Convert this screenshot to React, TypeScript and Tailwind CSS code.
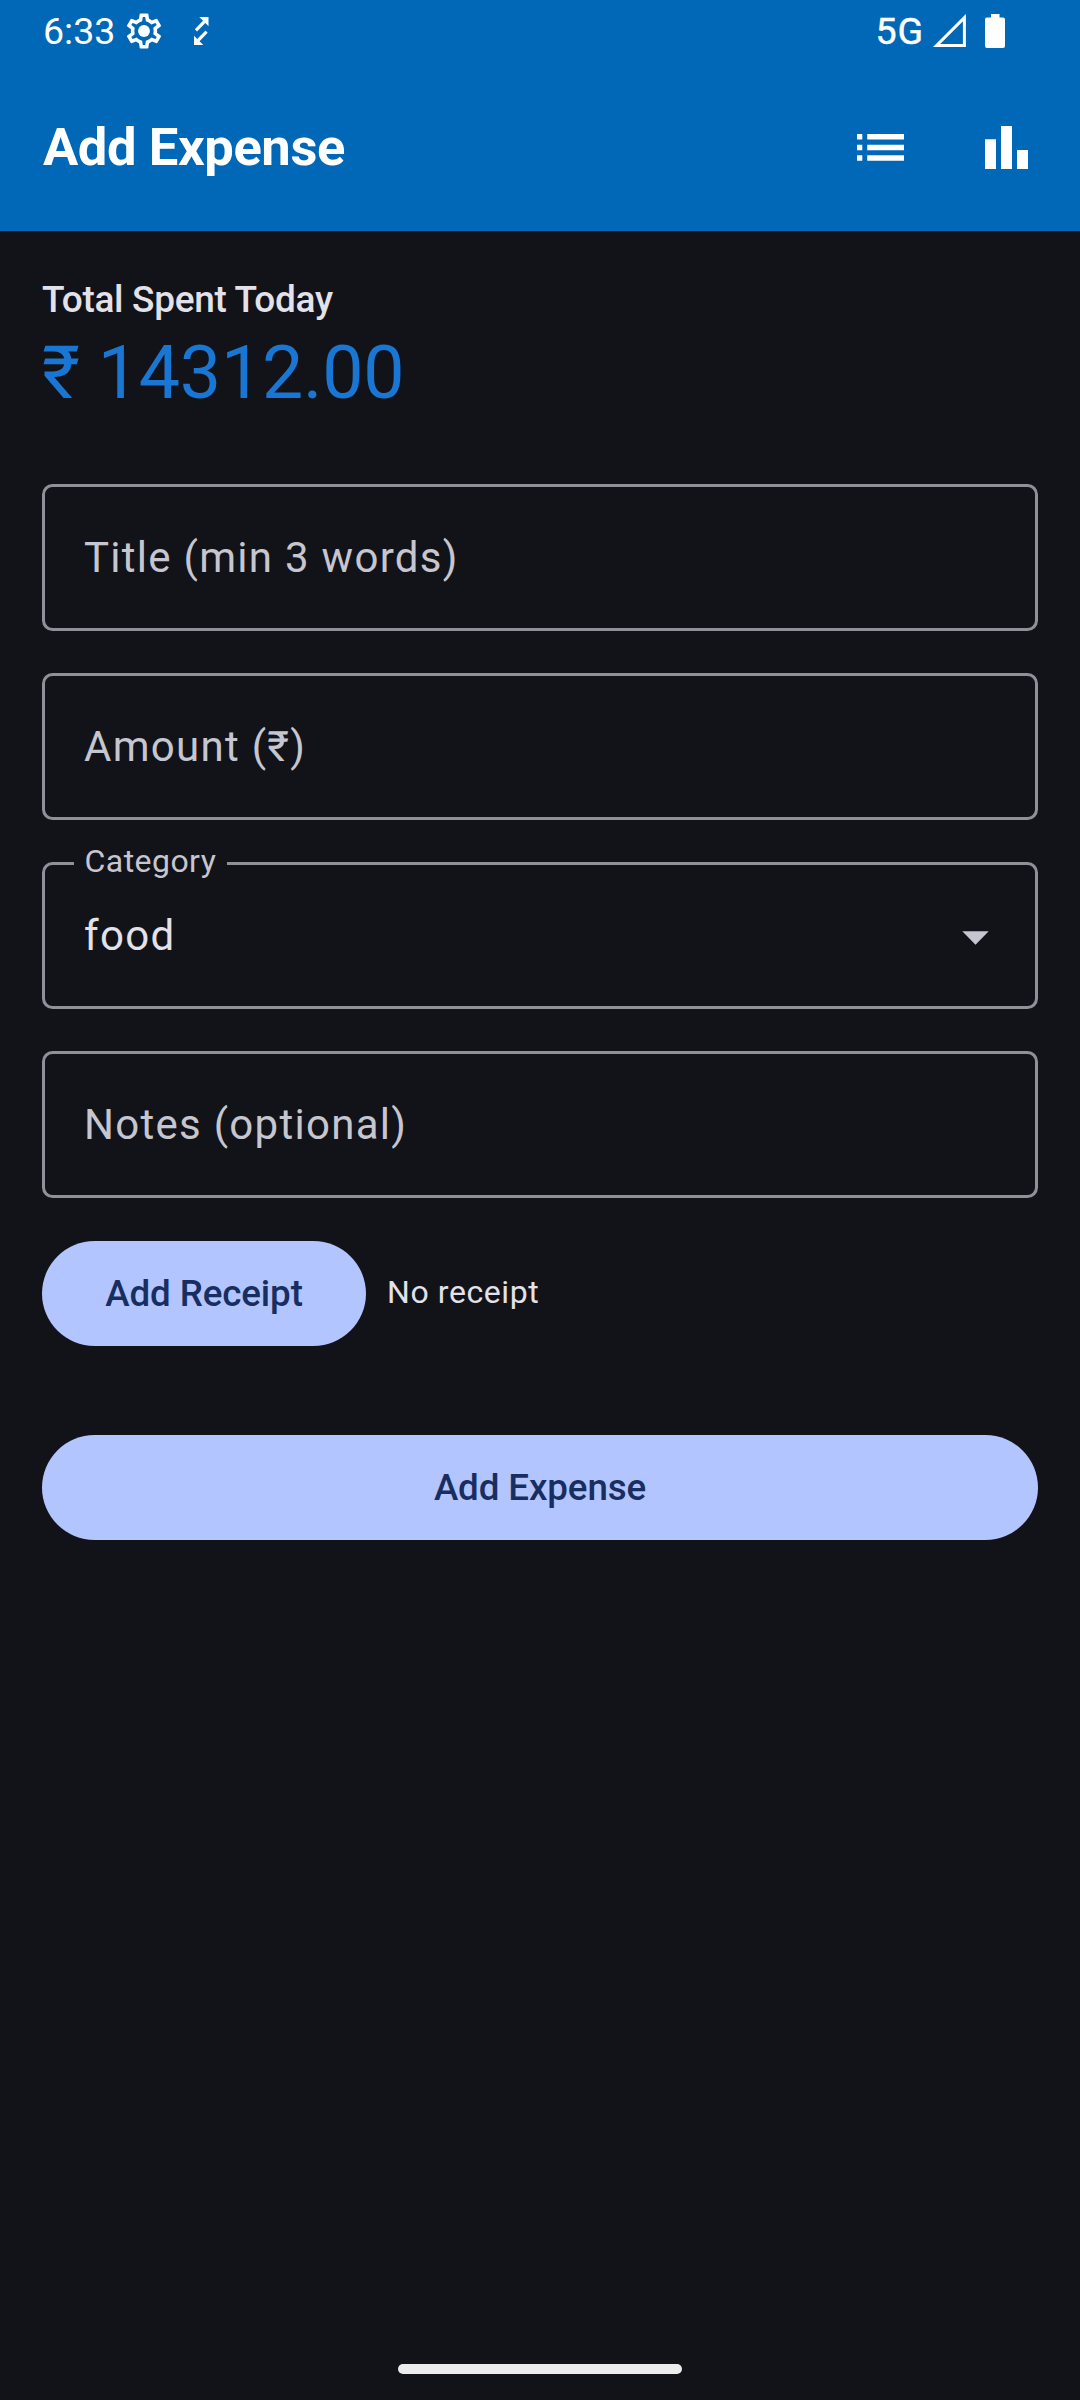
import React from "react";

function GearIcon() {
  return (
    <svg className="ml-[9px] -mt-px size-[42px]" viewBox="0 0 24 24" fill="#fff">
      <path d="M19.43 12.98c.04-.32.07-.64.07-.98s-.03-.66-.07-.98l2.11-1.65c.19-.15.24-.42.12-.64l-2-3.46a.5.5 0 0 0-.61-.22l-2.49 1c-.52-.4-1.08-.73-1.69-.98l-.38-2.65A.488.488 0 0 0 14 2h-4c-.25 0-.46.18-.49.42l-.38 2.65c-.61.25-1.17.59-1.69.98l-2.49-1a.5.5 0 0 0-.61.22l-2 3.46c-.13.22-.07.49.12.64l2.11 1.65c-.04.32-.07.65-.07.98s.03.66.07.98l-2.11 1.65c-.19.15-.24.42-.12.64l2 3.46c.12.22.39.3.61.22l2.49-1c.52.4 1.08.73 1.69.98l.38 2.65c.03.24.24.42.49.42h4c.25 0 .46-.18.49-.42l.38-2.65c.61-.25 1.17-.59 1.69-.98l2.49 1c.23.09.49 0 .61-.22l2-3.46c.12-.22.07-.49-.12-.64l-2.11-1.65zm-1.98-1.71c.04.31.05.52.05.73 0 .21-.02.43-.05.73l-.14 1.13.89.7 1.08.84-.7 1.21-1.27-.51-1.04-.42-.9.68c-.43.32-.84.56-1.25.73l-1.06.43-.16 1.13-.2 1.35h-1.4l-.19-1.35-.16-1.13-1.06-.43c-.43-.18-.83-.41-1.23-.71l-.91-.7-1.06.43-1.27.51-.7-1.21 1.08-.84.89-.7-.14-1.13c-.03-.31-.05-.54-.05-.74s.02-.43.05-.73l.14-1.13-.89-.7-1.08-.84.7-1.21 1.27.51 1.04.42.9-.68c.43-.32.84-.56 1.25-.73l1.06-.43.16-1.13.2-1.35h1.39l.19 1.35.16 1.13 1.06.43c.43.18.83.41 1.23.71l.91.7 1.06-.43 1.27-.51.7 1.21-1.07.85-.89.7.14 1.13z" />
      <circle cx="12" cy="12" r="3.4" />
    </svg>
  );
}

function Field({ label }: { label: string }) {
  return (
    <div className="flex h-[147px] items-center rounded-[10.5px] border-[3px] border-[#90909a] px-[39px] text-[42px] leading-[63px] tracking-[1.28px] text-[#c6c6d0]">
      {label}
    </div>
  );
}

export default function App() {
  return (
    <div className="flex h-[2400px] w-[1080px] flex-col overflow-hidden bg-[#121318] font-['Roboto',sans-serif] text-[#e3e1e9]">
      <header className="h-[231px] bg-[#0068b6] text-white">
        <div className="flex h-[63px] items-center pl-[43px]">
          <span className="mb-[2px] w-[71px] whitespace-nowrap text-[37.5px] leading-[44px]">6:33</span>
          <GearIcon />
          <svg className="mb-px ml-[29px] h-[28px] w-[15px]" viewBox="0 0 15 28" fill="#fff">
            <path d="M5.2 0H14.5V9.3L11.3 6.1L3 14.4L0.8 12.2L9 3.8Z" />
            <path d="M9.3 28H0V18.7L3.2 21.9L11.5 13.6L13.7 15.8L5.5 24.2Z" />
          </svg>
          <div className="ml-auto flex items-center pr-[75px]">
            <span className="mb-[2px] mr-[9px] text-[37.5px] leading-[44px] tracking-[1px] [-webkit-text-stroke:0.5px_#fff]">5G</span>
            <svg className="mb-[2px] size-[33px]" viewBox="0 0 33 33" fill="none">
              <path d="M3.6 31.4H31.4V3.6Z" stroke="#fff" strokeWidth="3" />
            </svg>
            <svg className="mb-px ml-[19px] h-[34px] w-[20px]" viewBox="0 0 20 34" fill="#fff">
              <path d="M6 0h8.500v3.500H18a2 2 0 0 1 2 2V32a2 2 0 0 1-2 2H2a2 2 0 0 1-2-2V5.500a2 2 0 0 1 2-2h4Z" />
            </svg>
          </div>
        </div>
        <div className="flex h-[168px] items-center pl-[43px] pr-[52px]">
          <h1 className="text-[52.5px] font-bold leading-[63px] tracking-[-0.4px]">Add Expense</h1>
          <svg className="ml-auto h-[27px] w-[47px]" viewBox="0 0 47 27" fill="#fff">
            <path d="M0 0h5.300v5.600H0zM10.200 0H47v5.600H10.200zM0 10.800h5.300v5.400H0zM10.200 10.800H47v5.400H10.200zM0 21.200h5.300v5.600H0zM10.200 21.200H47v5.600H10.200z" />
          </svg>
          <svg className="ml-[81px] h-[43px] w-[43px]" viewBox="0 0 43 43" fill="#fff">
            <path d="M0 13.300h11V43H0zM16 0h11v43H16zM32 24h11v19H32z" />
          </svg>
        </div>
      </header>

      <main className="flex flex-col px-[42px] pt-[43px]">
        <h2 className="text-[37px] font-medium leading-[52px] tracking-[-0.3px]">Total Spent Today</h2>
        <p className="h-[94px] text-[73.5px] leading-[94px] tracking-[-0.25px] text-[#1976d2]">₹ 14312.00</p>

        <div className="mt-[64px] flex flex-col gap-[42px]">
          <Field label="Title (min 3 words)" />
          <Field label="Amount (₹)" />
          <div className="relative flex h-[147px] items-center justify-between rounded-[10.5px] border-[3px] border-[#90909a] pl-[39px] pr-[46px]">
            <span className="absolute -top-[25px] left-[29px] w-[153px] whitespace-nowrap bg-[#121318] px-[10.5px] text-[32px] leading-[42px] tracking-[0.45px] text-[#c6c6d0]">
              Category
            </span>
            <span className="text-[42px] leading-[63px] tracking-[1.31px]">food</span>
            <svg className="mt-[4px] h-[14px] w-[27px]" viewBox="0 0 27 14" fill="#c6c6d0">
              <path d="M0.300 0.300H26.700L13.500 13.700Z" />
            </svg>
          </div>
          <Field label="Notes (optional)" />
        </div>

        <div className="mt-[43px] flex items-center gap-[21px]">
          <button className="h-[105px] w-[324px] rounded-full bg-[#b3c5ff] text-[36.75px] font-medium leading-[52px] tracking-[-0.12px] text-[#182e60]">
            Add Receipt
          </button>
          <span className="mb-[4px] text-[32px] leading-[42px] tracking-[0.58px]">No receipt</span>
        </div>

        <button className="mt-[89px] h-[105px] w-full rounded-full bg-[#b3c5ff] text-[36.75px] font-medium leading-[52px] tracking-[-0.12px] text-[#182e60]">
          Add Expense
        </button>
      </main>

      <div className="mx-auto mb-[26px] mt-auto h-[10px] w-[284px] rounded-full bg-[#ececec]" />
    </div>
  );
}
